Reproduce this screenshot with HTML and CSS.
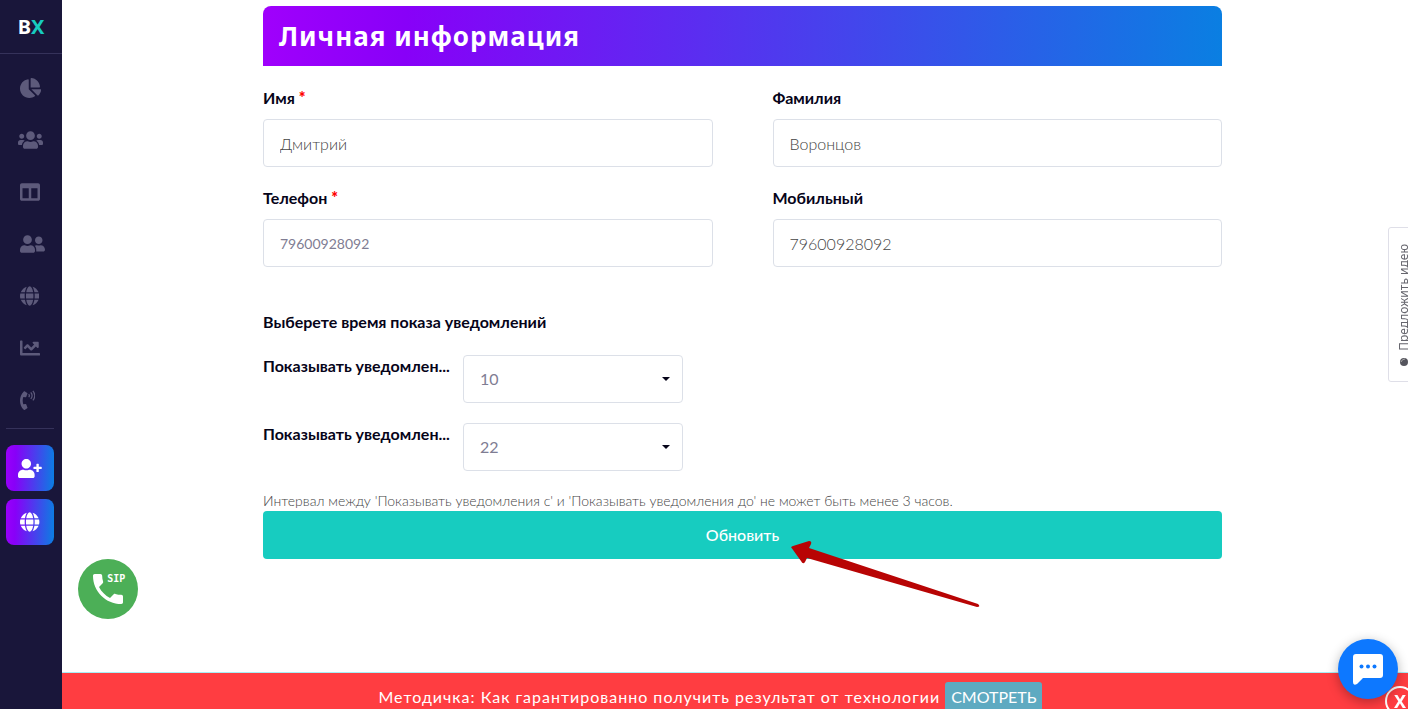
FILE: index.html
```
<!DOCTYPE html>
<html lang="ru">

<head>
  <meta charset="UTF-8">
  <meta name="viewport" content="width=device-width, initial-scale=1">
  <title>Личная информация</title>
  <link rel="stylesheet" href="styles.css">
</head>

<body>
  <aside class="sidebar">
    <a class="logo" href="#">B<span>X</span></a>
    <nav class="menu">
      <a href="#" aria-label="Статистика"><svg height="20" viewBox="0 0 544 512"><path d="M527.79 288H290.5l158.03 158.03c6.04 6.04 15.98 6.53 22.19.68 38.7-36.46 65.32-85.61 73.13-140.86 1.34-9.46-6.51-17.85-16.06-17.85zm-15.83-64.8C503.72 103.74 408.26 8.28 288.8.04 279.68-.59 272 7.1 272 16.24V240h223.77c9.14 0 16.82-7.68 16.19-16.8zM224 288V50.71c0-9.55-8.39-17.4-17.84-16.06C86.99 51.49-4.1 155.6.14 280.37 4.5 408.51 114.83 513.59 243.03 511.98c50.4-.63 96.97-16.87 135.26-44.03 7.9-5.6 8.42-17.23 1.57-24.08L224 288z"/></svg></a>
      <a class="wide" href="#" aria-label="Клиенты"><svg height="20" viewBox="0 0 640 512"><path d="M96 224c35.3 0 64-28.7 64-64s-28.7-64-64-64-64 28.7-64 64 28.7 64 64 64zm448 0c35.3 0 64-28.7 64-64s-28.7-64-64-64-64 28.7-64 64 28.7 64 64 64zm32 32h-64c-17.6 0-33.5 7.1-45.1 18.6 40.3 22.1 68.9 62 75.1 109.4h66c17.7 0 32-14.3 32-32v-32c0-35.3-28.7-64-64-64zm-256 0c61.9 0 112-50.1 112-112S381.9 32 320 32 208 82.1 208 144s50.1 112 112 112zm76.8 32h-8.3c-20.8 10-43.9 16-68.5 16s-47.6-6-68.5-16h-8.3C179.6 288 128 339.6 128 403.2V432c0 26.5 21.5 48 48 48h288c26.5 0 48-21.5 48-48v-28.8c0-63.6-51.6-115.2-115.2-115.2zm-223.7-13.4C161.5 263.1 145.6 256 128 256H64c-35.3 0-64 28.7-64 64v32c0 17.7 14.3 32 32 32h65.9c6.3-47.4 34.9-87.3 75.2-109.4z"/></svg></a>
      <a href="#" aria-label="Доска"><svg height="20" viewBox="0 0 512 512"><path d="M464 32H48C21.49 32 0 53.49 0 80v352c0 26.51 21.49 48 48 48h416c26.51 0 48-21.49 48-48V80c0-26.51-21.49-48-48-48zM224 416H64V160h160v256zm224 0H288V160h160v256z"/></svg></a>
      <a href="#" aria-label="Партнёры"><svg height="20" viewBox="0 0 640 512"><path d="M192 256c61.9 0 112-50.1 112-112S253.9 32 192 32 80 82.1 80 144s50.1 112 112 112zm76.8 32h-8.3c-20.8 10-43.9 16-68.5 16s-47.6-6-68.5-16h-8.3C51.6 288 0 339.6 0 403.2V432c0 26.5 21.5 48 48 48h288c26.5 0 48-21.5 48-48v-28.8c0-63.6-51.6-115.2-115.2-115.2zM480 256c53 0 96-43 96-96s-43-96-96-96-96 43-96 96 43 96 96 96zm48 32h-3.8c-13.9 4.8-28.6 8-44.2 8s-30.3-3.2-44.2-8H432c-20.4 0-39.2 5.9-55.7 15.4 24.4 26.3 39.7 61.2 39.7 99.8v38.4c0 2.2-.5 4.3-.6 6.4H592c26.5 0 48-21.5 48-48 0-61.9-50.1-112-112-112z"/></svg></a>
      <a href="#" aria-label="Сайты"><svg height="20" viewBox="0 0 496 512"><path d="M336.5 160C322 70.7 287.8 8 248 8s-74 62.7-88.5 152h177zM152 256c0 22.2 1.2 43.5 3.3 64h185.3c2.1-20.5 3.3-41.8 3.3-64s-1.2-43.5-3.3-64H155.3c-2.1 20.5-3.3 41.8-3.3 64zm324.7-96c-28.6-67.9-86.5-120.4-158-141.6 24.4 33.8 41.2 84.7 50 141.6h108zM177.2 18.4C105.8 39.6 47.8 92.1 19.3 160h108c8.7-56.9 25.5-107.8 49.9-141.6zM487.4 192H372.7c2.1 21 3.3 42.5 3.3 64s-1.2 43-3.3 64h114.6c5.5-20.5 8.6-41.8 8.6-64s-3.1-43.5-8.5-64zM120 256c0-21.5 1.2-43 3.3-64H8.6C3.2 212.5 0 233.8 0 256s3.2 43.5 8.6 64h114.6c-2-21-3.2-42.5-3.2-64zm39.5 96c14.5 89.3 48.7 152 88.5 152s74-62.7 88.5-152h-177zm159.3 141.6c71.4-21.2 129.4-73.7 158-141.6h-108c-8.8 56.9-25.6 107.8-50 141.6zM19.3 352c28.6 67.9 86.5 120.4 158 141.6-24.4-33.8-41.2-84.7-50-141.6h-108z"/></svg></a>
      <a href="#" aria-label="Отчёты"><svg height="20" viewBox="0 0 512 512"><path d="M496 384H64V80c0-8.84-7.16-16-16-16H16C7.16 64 0 71.16 0 80v336c0 17.67 14.33 32 32 32h464c8.84 0 16-7.16 16-16v-32c0-8.84-7.16-16-16-16zM464 96H345.94c-21.38 0-32.09 25.85-16.97 40.97l32.4 32.4L288 242.75l-73.37-73.37c-12.5-12.5-32.76-12.5-45.25 0l-68.69 68.69c-6.25 6.25-6.25 16.38 0 22.63l22.62 22.62c6.25 6.25 16.38 6.25 22.63 0L192 237.25l73.37 73.37c12.5 12.5 32.76 12.5 45.25 0l96-96 32.4 32.4c15.12 15.12 40.97 4.41 40.97-16.97V112c.01-8.84-7.15-16-15.99-16z"/></svg></a>
      <a href="#" aria-label="Звонки"><svg height="20" viewBox="0 0 384 512"><path d="M97.333 506.966c-129.874-129.874-129.681-340.252 0-469.933 5.698-5.698 14.527-6.632 21.263-2.422l64.817 40.513a17.187 17.187 0 0 1 6.849 20.958l-32.408 81.021a17.188 17.188 0 0 1-17.669 10.719l-55.81-5.58c-21.051 58.261-20.612 122.471 0 179.515l55.811-5.581a17.188 17.188 0 0 1 17.669 10.719l32.408 81.022a17.188 17.188 0 0 1-6.849 20.958l-64.817 40.513a17.19 17.19 0 0 1-21.264-2.422z"/><path class="wave" d="M222 104q36 40 0 80M276 60q68 84 0 168M330 22q98 122 0 244"/></svg></a>
    </nav>
    <div class="quick">
      <a href="#" aria-label="Добавить клиента"><svg height="19" viewBox="0 0 640 512"><path d="M624 208h-64v-64c0-8.8-7.2-16-16-16h-32c-8.8 0-16 7.2-16 16v64h-64c-8.8 0-16 7.2-16 16v32c0 8.8 7.2 16 16 16h64v64c0 8.8 7.2 16 16 16h32c8.8 0 16-7.2 16-16v-64h64c8.8 0 16-7.2 16-16v-32c0-8.8-7.2-16-16-16zm-400 48c70.7 0 128-57.3 128-128S294.7 0 224 0 96 57.3 96 128s57.3 128 128 128zm89.6 32h-16.7c-22.2 10.2-46.9 16-72.9 16s-50.6-5.8-72.9-16h-16.7C60.2 288 0 348.2 0 422.4V464c0 26.5 21.5 48 48 48h352c26.5 0 48-21.5 48-48v-41.6c0-74.2-60.2-134.4-134.4-134.4z"/></svg></a>
      <a href="#" aria-label="Добавить сайт"><svg height="20" viewBox="0 0 496 512"><path d="M336.5 160C322 70.7 287.8 8 248 8s-74 62.7-88.5 152h177zM152 256c0 22.2 1.2 43.5 3.3 64h185.3c2.1-20.5 3.3-41.8 3.3-64s-1.2-43.5-3.3-64H155.3c-2.1 20.5-3.3 41.8-3.3 64zm324.7-96c-28.6-67.9-86.5-120.4-158-141.6 24.4 33.8 41.2 84.7 50 141.6h108zM177.2 18.4C105.8 39.6 47.8 92.1 19.3 160h108c8.7-56.9 25.5-107.8 49.9-141.6zM487.4 192H372.7c2.1 21 3.3 42.5 3.3 64s-1.2 43-3.3 64h114.6c5.5-20.5 8.6-41.8 8.6-64s-3.1-43.5-8.5-64zM120 256c0-21.5 1.2-43 3.3-64H8.6C3.2 212.5 0 233.8 0 256s3.2 43.5 8.6 64h114.6c-2-21-3.2-42.5-3.2-64zm39.5 96c14.5 89.3 48.7 152 88.5 152s74-62.7 88.5-152h-177zm159.3 141.6c71.4-21.2 129.4-73.7 158-141.6h-108c-8.8 56.9-25.6 107.8-50 141.6zM19.3 352c28.6 67.9 86.5 120.4 158 141.6-24.4-33.8-41.2-84.7-50-141.6h-108z"/></svg></a>
    </div>
  </aside>

  <main class="content">
    <form class="profile">
      <h1>Личная информация</h1>
      <div class="fields">
        <div class="field">
          <label for="name">Имя <b>*</b></label>
          <input type="text" id="name" value="Дмитрий">
        </div>
        <div class="field">
          <label for="surname">Фамилия</label>
          <input type="text" id="surname" value="Воронцов">
        </div>
        <div class="field">
          <label for="phone">Телефон <b>*</b></label>
          <input type="tel" id="phone" class="masked" value="79600928092">
        </div>
        <div class="field">
          <label for="mobile">Мобильный</label>
          <input type="tel" id="mobile" value="79600928092">
        </div>
      </div>

      <h2>Выберете время показа уведомлений</h2>
      <div class="time-row">
        <label for="time_from">Показывать уведомлен...</label>
        <select id="time_from">
          <option>9</option>
          <option selected>10</option>
          <option>11</option>
        </select>
      </div>
      <div class="time-row">
        <label for="time_to">Показывать уведомлен...</label>
        <select id="time_to">
          <option>21</option>
          <option selected>22</option>
          <option>23</option>
        </select>
      </div>
      <p class="note">Интервал между 'Показывать уведомления с' и 'Показывать уведомления до' не может быть менее 3 часов.</p>
      <div class="submit">
        <button type="submit">Обновить</button>
        <svg class="arrow" width="192" height="68" viewBox="0 0 192 68"><path d="M2 7.500Q0 6 3 5L19 0Q22 0 21 3L19 7 188 63Q191 66 187 66L17 17 15 21Q13 24 11 20Z"/></svg>
      </div>
    </form>
  </main>

  <button class="sip" type="button" aria-label="Позвонить">
    <svg width="40" height="40" viewBox="0 0 24 24"><path d="M20 15.5c-1.25 0-2.45-.2-3.57-.57-.35-.11-.74-.03-1.02.24l-2.2 2.2c-2.83-1.44-5.15-3.75-6.59-6.59l2.2-2.21c.28-.26.36-.65.25-1C8.7 6.45 8.5 5.25 8.5 4c0-.55-.45-1-1-1H4c-.55 0-1 .45-1 1 0 9.39 7.61 17 17 17 .55 0 1-.45 1-1v-3.5c0-.55-.45-1-1-1z"/><text x="11.6" y="8">SIP</text></svg>
  </button>

  <a class="idea" href="#">
    <span>Предложить идею</span>
    <svg width="10" height="10" viewBox="0 0 10 10"><circle cx="5" cy="5" r="4"/><path d="M2 5q1-3 4-3"/></svg>
  </a>

  <div class="banner">
    <span>Методичка: Как гарантированно получить результат от технологии</span>
    <a href="#">СМОТРЕТЬ</a>
  </div>
  <button class="banner-close" type="button">X</button>
  <button class="chat" type="button" aria-label="Чат">
    <svg width="30" height="31" viewBox="0 0 30 31"><path fill="#fff" d="M3 0h24q3 0 3 3v18q0 3-3 3H10l-6 6q-4 2-4-2V3q0-3 3-3z"/><g fill="#0d78ff"><circle cx="8.500" cy="12.500" r="2"/><circle cx="15" cy="12.500" r="2"/><circle cx="21.500" cy="12.500" r="2"/></g></svg>
  </button>
</body>

</html>
```
FILE: styles.css
```
* {
  box-sizing: border-box;
}

body {
  display: flex;
  min-height: 100vh;
  margin: 0;
  overflow: hidden;
  color: #060419;
  background: #fff;
  font: 16px/24px Lato, "Noto Sans", sans-serif;
}

a {
  text-decoration: none;
}

button,
input,
select {
  font: inherit;
}

button {
  padding: 0;
  border: 0;
  cursor: pointer;
}

/* sidebar */
.sidebar {
  flex: none;
  width: 62px;
  background: #19163a;
}

.logo {
  display: block;
  height: 54px;
  border-bottom: 1px solid #35325a;
  color: #fff;
  font: bold 20px/54px "Noto Sans", sans-serif;
  text-align: center;
}

.logo span {
  color: #17ccc0;
}

.menu {
  margin: 0 8px 0 6px;
  padding: 8px 0 2px;
  border-bottom: 1px solid #35325a;
}

.menu a {
  display: flex;
  align-items: center;
  height: 52px;
  padding-left: 14px;
}

.menu .wide {
  padding-left: 12px;
}

.menu svg {
  fill: #5d5a7b;
}

.menu .wave {
  fill: none;
  stroke: #5d5a7b;
  stroke-width: 32;
}

.quick {
  display: flex;
  flex-direction: column;
  gap: 8px;
  margin: 16px 8px 0 6px;
}

.quick a {
  display: flex;
  align-items: center;
  justify-content: center;
  height: 46px;
  border-radius: 8px;
  background: linear-gradient(92deg, #9a00fb 0%, #8800f8 20%, #0a7fe2 100%);
}

.quick svg {
  fill: #fff;
}

/* profile form */
.content {
  flex: 1;
  padding: 6px 0 150px 15px;
}

.profile {
  max-width: 959px;
  margin: 0 auto;
}

h1 {
  margin: 0 0 20px;
  padding: 0 16px;
  border-radius: 8px 8px 0 0;
  color: #fff;
  background: linear-gradient(92deg, #a000fc 0%, #8800f8 15%, #0a7fe2 100%);
  font: bold 26px/60px "Noto Sans", sans-serif;
  letter-spacing: 1px;
}

.fields {
  display: grid;
  grid-template-columns: 1fr 1fr;
  gap: 19px 60px;
}

label {
  display: block;
  font-weight: 700;
}

.field label {
  margin-bottom: 9px;
}

label b {
  color: #f00;
}

input,
select {
  display: block;
  width: 100%;
  height: 48px;
  padding: 0 16px;
  border: 1px solid #dce0e8;
  border-radius: 4px;
  color: #444;
  background: #fff;
  font-weight: 300;
}

.masked {
  color: #7f7d93;
  font-size: 14px;
  font-weight: 400;
}

h2 {
  margin: 43px 0 21px;
  font-size: 16px;
  line-height: 24px;
}

.time-row {
  display: flex;
  margin-bottom: 20px;
}

.time-row label {
  width: 200px;
  line-height: 22px;
  white-space: nowrap;
}

.time-row select {
  width: 220px;
  appearance: none;
  color: #7f7d93;
  background: url("data:image/svg+xml,%3Csvg xmlns='http://www.w3.org/2000/svg' width='8' height='4'%3E%3Cpath d='M0 0h8L4 4z' fill='%23060419'/%3E%3C/svg%3E") no-repeat right 12px center;
  font-weight: 400;
}

.note {
  margin: 0;
  color: #444;
  font-size: 14px;
  font-weight: 300;
  line-height: 20px;
}

.submit {
  position: relative;
}

.submit button {
  width: 100%;
  height: 48px;
  border-radius: 4px;
  color: #fff;
  background: #17ccc0;
  font-weight: 500;
}

.arrow {
  position: absolute;
  top: 30px;
  left: 55%;
  fill: #b80404;
  pointer-events: none;
}

/* floating widgets */
.sip {
  position: fixed;
  bottom: 90px;
  left: 78px;
  display: flex;
  align-items: center;
  justify-content: center;
  width: 60px;
  height: 60px;
  border-radius: 50%;
  background: #4caf57;
}

.sip svg {
  fill: #fff;
}

.sip text {
  font: bold 6px "DejaVu Sans Mono", monospace;
}

.idea {
  position: fixed;
  top: 227px;
  right: -12px;
  display: flex;
  flex-direction: column;
  align-items: center;
  gap: 6px;
  width: 32px;
  height: 155px;
  padding-top: 16px;
  border: 1px solid #dfdfe8;
  border-radius: 3px;
  color: #66666e;
  font: 12px/16px "Noto Sans", sans-serif;
}

.idea span {
  writing-mode: vertical-rl;
  transform: rotate(180deg);
}

.idea circle {
  fill: #55555d;
}

.idea path {
  fill: none;
  stroke: #aaa;
}

.banner {
  position: fixed;
  right: 0;
  bottom: 0;
  left: 62px;
  display: flex;
  justify-content: center;
  gap: 5px;
  height: 37px;
  padding: 9px 49px 0 0;
  overflow: hidden;
  border-top: 1px solid #a8eef5;
  color: #fff;
  background: #ff3d41;
  font-size: 16px;
  line-height: 30px;
  white-space: nowrap;
}

.banner span {
  letter-spacing: 1px;
}

.banner a {
  height: 32px;
  padding: 0 6px;
  border-radius: 3px;
  color: #fff;
  background: #5eaac1;
}

.banner-close {
  position: fixed;
  right: -7px;
  bottom: -7px;
  width: 30px;
  height: 30px;
  border: 2px solid #fff;
  border-radius: 50%;
  color: #fff;
  background: #ff3d41;
  font: bold 18px/26px "Noto Sans", sans-serif;
}

.chat {
  position: fixed;
  right: 10px;
  bottom: 10px;
  display: flex;
  align-items: center;
  justify-content: center;
  width: 60px;
  height: 60px;
  border-radius: 50%;
  background: #0d78ff;
  box-shadow: 0 3px 12px rgba(0, 0, 0, .3);
}
```
